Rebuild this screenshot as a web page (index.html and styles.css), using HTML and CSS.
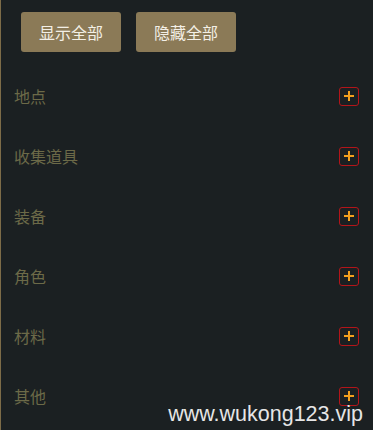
FILE: index.html
```html
<!DOCTYPE html>
<html lang="zh">
<head>
<meta charset="utf-8">
<link rel="stylesheet" href="styles.css">
</head>
<body>
<div class="panel">
  <div class="actions">
    <button class="btn">显示全部</button>
    <button class="btn">隐藏全部</button>
  </div>
  <ul class="list">
    <li class="row"><span class="label">地点</span><span class="plus"><svg viewBox="0 0 10 10" width="10" height="10"><path d="M5 0V10M0 5H10" stroke="#f2a01e" stroke-width="2"/></svg></span></li>
    <li class="row"><span class="label">收集道具</span><span class="plus"><svg viewBox="0 0 10 10" width="10" height="10"><path d="M5 0V10M0 5H10" stroke="#f2a01e" stroke-width="2"/></svg></span></li>
    <li class="row"><span class="label">装备</span><span class="plus"><svg viewBox="0 0 10 10" width="10" height="10"><path d="M5 0V10M0 5H10" stroke="#f2a01e" stroke-width="2"/></svg></span></li>
    <li class="row"><span class="label">角色</span><span class="plus"><svg viewBox="0 0 10 10" width="10" height="10"><path d="M5 0V10M0 5H10" stroke="#f2a01e" stroke-width="2"/></svg></span></li>
    <li class="row"><span class="label">材料</span><span class="plus"><svg viewBox="0 0 10 10" width="10" height="10"><path d="M5 0V10M0 5H10" stroke="#f2a01e" stroke-width="2"/></svg></span></li>
    <li class="row"><span class="label">其他</span><span class="plus"><svg viewBox="0 0 10 10" width="10" height="10"><path d="M5 0V10M0 5H10" stroke="#f2a01e" stroke-width="2"/></svg></span></li>
  </ul>
  <div class="watermark">www.wukong123.vip</div>
</div>
</body>
</html>
```

FILE: styles.css
```css
html, body {
  margin: 0;
  padding: 0;
  background: #1b2022;
}
body {
  font-family: "Noto Sans CJK SC", "Liberation Sans", sans-serif;
  width: 373px;
  height: 430px;
  overflow: hidden;
}
.panel {
  position: relative;
  height: 430px;
  border-left: 1px solid #7d6c48;
  box-sizing: border-box;
}
.actions {
  display: flex;
  gap: 15px;
  padding: 12px 0 0 20px;
}
.btn {
  width: 100px;
  height: 40px;
  background: #8b7a57;
  color: #f3efe6;
  border: none;
  border-radius: 3px;
  font-family: "Noto Sans CJK SC", sans-serif;
  font-size: 16px;
  padding: 0;
  line-height: 40px;
}
.list {
  list-style: none;
  margin: 14px 0 0;
  padding: 0;
}
.row {
  height: 60px;
  display: flex;
  align-items: center;
  justify-content: space-between;
  padding: 0 14px 0 13px;
}
.label {
  color: #6c6a48;
  font-size: 16px;
}
.plus {
  width: 18px;
  height: 17px;
  border: 1px solid #b3151a;
  border-radius: 3px;
  display: flex;
  align-items: center;
  justify-content: center;
}
.plus svg {
  display: block;
}
.watermark {
  position: absolute;
  right: 10px;
  bottom: 3px;
  color: #e6e6e6;
  font-family: "Liberation Sans", sans-serif;
  font-size: 21.5px;
}
```
